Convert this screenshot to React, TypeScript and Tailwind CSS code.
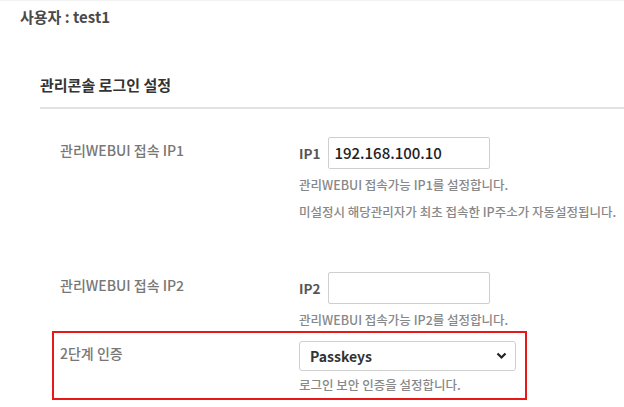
import React from "react";

const font = { fontFamily: '"Noto Sans CJK KR", "Noto Sans", sans-serif' };

function HelpText({ children, className = "mt-[7px]" }: { children: React.ReactNode; className?: string }) {
  return <p className={`text-[12.5px] leading-[18px] text-[#888] font-medium ${className}`}>{children}</p>;
}

export default function App() {
  return (
    <div className="w-[624px] h-[407px] bg-white overflow-hidden border-t border-[#f2f2f2]" style={font}>
      <div className="pl-[20px] pt-[6px] text-[15px] leading-[20px] font-bold text-[#4a4a4a]">사용자 : test1</div>

      <div className="pl-[40px] mt-[48px]">
        <h2 className="text-[15px] leading-[20px] font-bold text-[#333] pb-[12px] border-b-2 border-[#e2e2e2]">
          관리콘솔 로그인 설정
        </h2>

        <div className="flex pt-[28px]">
          <div className="w-[259px] pl-[20px] pt-[4px] text-[14px] leading-[18px] font-medium text-[#777]">관리WEBUI 접속 IP1</div>
          <div className="flex flex-col">
            <div className="flex items-center gap-[8px]">
              <span className="text-[13.5px] font-bold text-[#555]">IP1</span>
              <div className="w-[162px] h-[32px] border border-[#cfcfcf] rounded-[2px] flex items-center px-[5px] text-[15px] font-medium text-[#222]">
                192.168.100.10
              </div>
            </div>
            <HelpText>관리WEBUI 접속가능 IP1를 설정합니다.</HelpText>
            <HelpText className="mt-[9px]">미설정시 해당관리자가 최초 접속한 IP주소가 자동설정됩니다.</HelpText>
          </div>
        </div>

        <div className="flex pt-[51px]">
          <div className="w-[259px] pl-[20px] pt-[4px] text-[14px] leading-[18px] font-medium text-[#777]">관리WEBUI 접속 IP2</div>
          <div className="flex flex-col">
            <div className="flex items-center gap-[8px]">
              <span className="text-[13.5px] font-bold text-[#555]">IP2</span>
              <div className="w-[162px] h-[32px] border border-[#cfcfcf] rounded-[2px]" />
            </div>
            <HelpText>관리WEBUI 접속가능 IP2를 설정합니다.</HelpText>
          </div>
        </div>

        <div className="flex mt-[2px] ml-[12px] w-[475px] h-[69px] border-2 border-[#e81818]">
          <div className="w-[245px] pl-[6px] pt-[11px] text-[14px] leading-[18px] font-medium text-[#777]">2단계 인증</div>
          <div className="flex flex-col pt-[8px]">
            <div className="w-[217px] h-[30px] border border-[#d0d0d0] rounded-[3px] flex items-center justify-between pl-[10px] pr-[8px]">
              <span className="text-[14px] font-bold text-[#333]">Passkeys</span>
              <svg width="11" height="8" viewBox="0 0 11 8">
                <path d="M1.5 1.5 L5.5 5.5 L9.5 1.5" stroke="#222" strokeWidth="2.2" fill="none" />
              </svg>
            </div>
            <HelpText className="mt-[5px]">로그인 보안 인증을 설정합니다.</HelpText>
          </div>
        </div>
      </div>
    </div>
  );
}
